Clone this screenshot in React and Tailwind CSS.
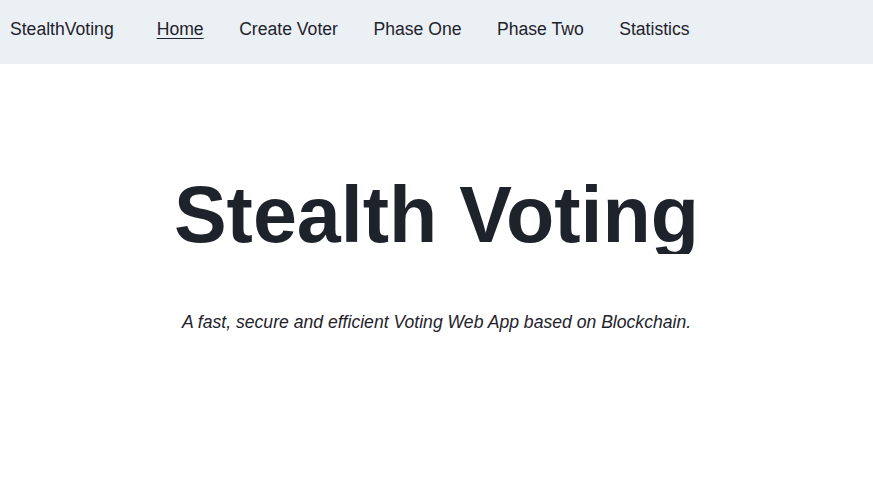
const links = ["Home", "Create Voter", "Phase One", "Phase Two", "Statistics"];

export default function App() {
  return (
    <div className="min-h-[498px] bg-white font-['Liberation_Sans',Arial,sans-serif] text-[#1e222b]">
      <nav className="h-[64px] bg-[#ebf0f5] flex items-center pb-[5px] pl-[10px] text-[17.6px]">
        <span className="mr-[43px]">StealthVoting</span>
        <ul className="flex gap-[35.5px]">
          {links.map((l, i) => (
            <li key={l} className={i === 0 ? "underline underline-offset-[3px]" : ""}>
              {l}
            </li>
          ))}
        </ul>
      </nav>

      <main className="flex flex-col items-center">
        <h1 className="mt-[111px] text-[79px] leading-none font-bold overflow-hidden">
          Stealth Voting
        </h1>
        <p className="mt-[55px] text-[17.6px] leading-[26px] italic">
          A fast, secure and efficient Voting Web App based on Blockchain.
        </p>
      </main>
    </div>
  );
}
